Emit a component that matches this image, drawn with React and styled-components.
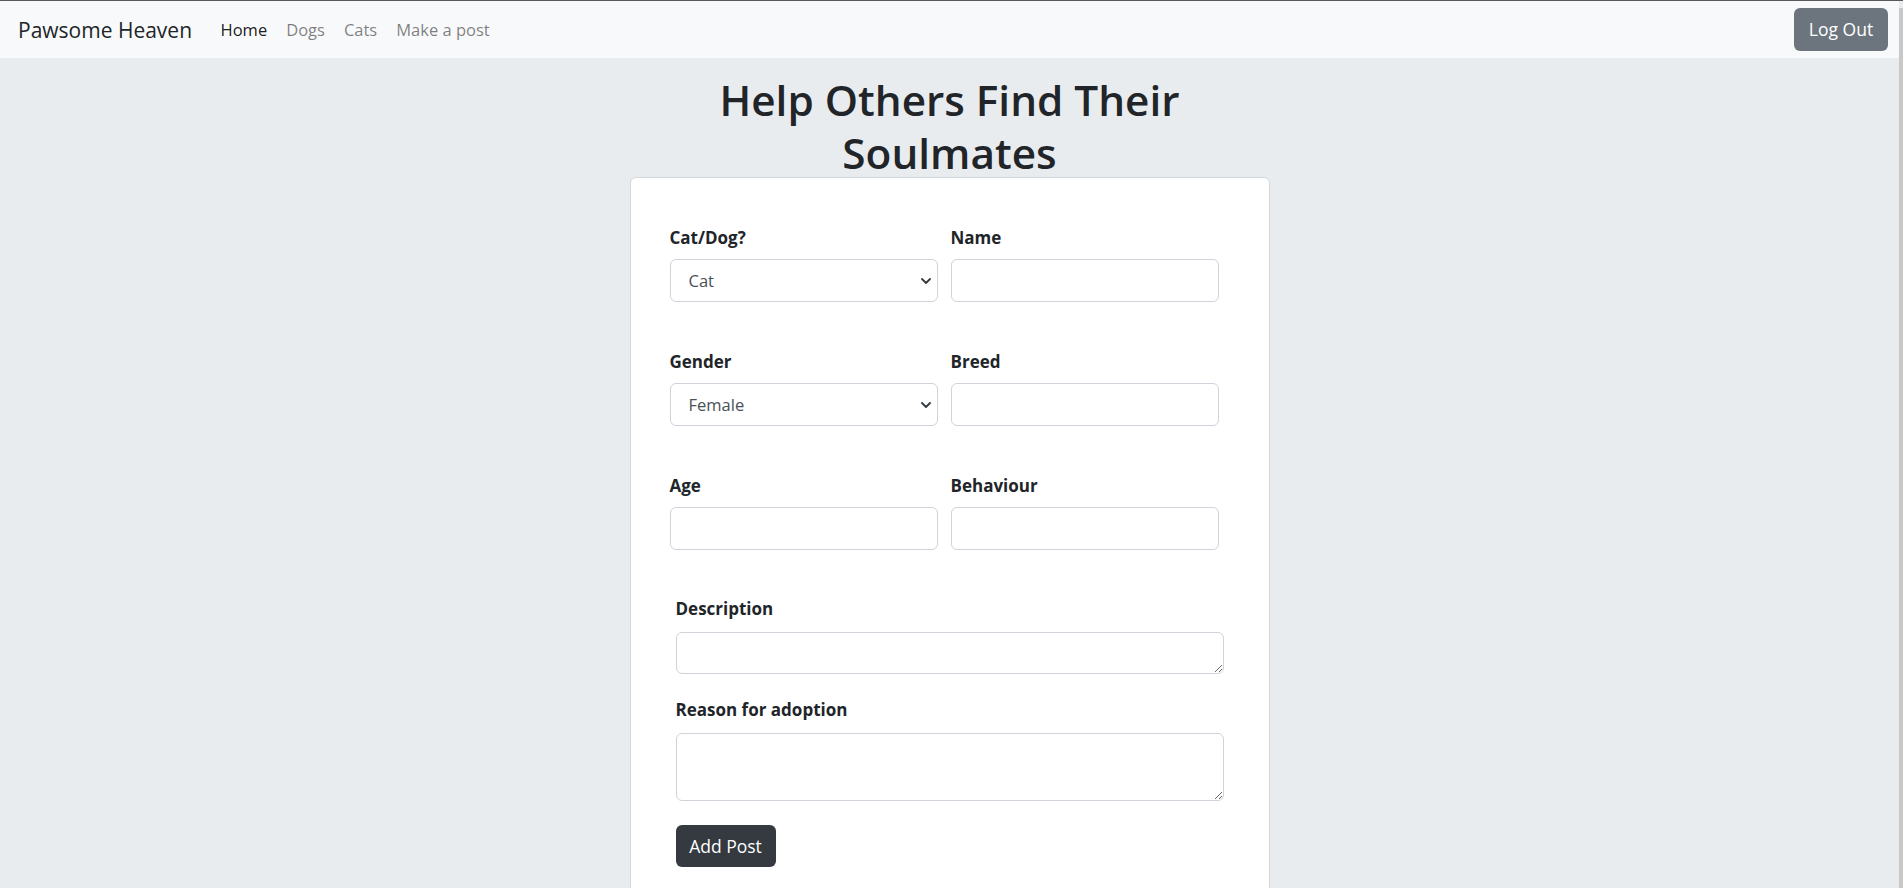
import styled, { createGlobalStyle } from 'styled-components';

const GlobalStyle = createGlobalStyle`
  html, body {
    margin: 0;
    padding: 0;
    overflow: hidden;
  }
  body {
    background-color: #e9ecef;
    font-family: 'Open Sans', 'Noto Sans', sans-serif;
    color: #212529;
  }
  * {
    box-sizing: border-box;
  }
`;

const rows = [
  [
    { label: 'Cat/Dog?', type: 'select', options: ['Cat', 'Dog'] },
    { label: 'Name', type: 'input' },
  ],
  [
    { label: 'Gender', type: 'select', options: ['Female', 'Male'] },
    { label: 'Breed', type: 'input' },
  ],
  [
    { label: 'Age', type: 'input' },
    { label: 'Behaviour', type: 'input' },
  ],
];

function Chevron() {
  return (
    <ChevronIcon width="10" height="6" viewBox="0 0 10 6">
      <path d="M1 1l4 4 4-4" fill="none" stroke="#343a40" strokeWidth="1.8" strokeLinecap="round" strokeLinejoin="round" />
    </ChevronIcon>
  );
}

function Field({ field }) {
  return (
    <FieldBox>
      <Label>{field.label}</Label>
      {field.type === 'select' ? (
        <SelectWrap>
          <Select defaultValue={field.options[0]}>
            {field.options.map((o) => (
              <option key={o}>{o}</option>
            ))}
          </Select>
          <Chevron />
        </SelectWrap>
      ) : (
        <Input type="text" />
      )}
    </FieldBox>
  );
}

function App() {
  return (
    <Shell>
      <GlobalStyle />
      <Page>
        <Navbar>
          <Brand>Pawsome Heaven</Brand>
          <NavList>
            <NavLink active>Home</NavLink>
            <NavLink>Dogs</NavLink>
            <NavLink>Cats</NavLink>
            <NavLink>Make a post</NavLink>
          </NavList>
          <LogOut>Log Out</LogOut>
        </Navbar>
        <Main>
          <Heading>
            Help Others Find Their
            <br />
            Soulmates
          </Heading>
          <Card>
            <Grid>
              {rows.map((row) =>
                row.map((f) => <Field key={f.label} field={f} />)
              )}
            </Grid>
            <Wide>
              <AreaLabel>Description</AreaLabel>
              <TextArea rows={1} h={42} />
              <AreaLabel top={24}>Reason for adoption</AreaLabel>
              <TextArea rows={2} h={68} />
              <AddButton>Add Post</AddButton>
            </Wide>
          </Card>
        </Main>
      </Page>
      <ScrollRail />
    </Shell>
  );
}

const Shell = styled.div`
  display: flex;
  height: 100vh;
  overflow: hidden;
  border-top: 1px solid #5a5a5a;
`;

const Page = styled.div`
  flex: 1;
  display: flex;
  flex-direction: column;
  min-width: 0;
  & > * {
    flex-shrink: 0;
  }
`;

const ScrollRail = styled.div`
  width: 4px;
  background-color: #c8c8c8;
  margin-top: 7px;
`;

const Navbar = styled.nav`
  height: 57px;
  display: flex;
  align-items: center;
  padding: 0 11px 0 18px;
  background-color: #f8f9fa;
`;

const Brand = styled.span`
  font-size: 21px;
  margin-right: 19px;
  color: #212529;
`;

const NavList = styled.div`
  display: flex;
`;

const NavLink = styled.span`
  padding: 0 9.5px;
  font-size: 16.5px;
  color: ${(p) => (p.active ? 'rgba(0, 0, 0, 0.9)' : 'rgba(0, 0, 0, 0.5)')};
`;

const LogOut = styled.button`
  margin-left: auto;
  margin-top: -1px;
  height: 43px;
  width: 94px;
  border: none;
  border-radius: 6px;
  background-color: #6c757d;
  color: #fff;
  font-family: inherit;
  font-size: 17.5px;
`;

const Main = styled.main`
  display: flex;
  flex-direction: column;
  align-items: center;
`;

const Heading = styled.h1`
  margin: 15px 0 -2px;
  font-size: 42.3px;
  line-height: 53px;
  font-weight: 600;
  text-align: center;
  color: #212529;
`;

const Card = styled.div`
  width: 640px;
  min-height: 760px;
  background-color: #fff;
  border: 1px solid #d4d7da;
  border-radius: 6px;
  padding: 48px 39px 40px;
`;

const Grid = styled.div`
  display: grid;
  grid-template-columns: 268px 268px;
  column-gap: 13px;
  row-gap: 48px;
`;

const FieldBox = styled.div`
  display: flex;
  flex-direction: column;
`;

const Label = styled.label`
  font-size: 17px;
  line-height: 24px;
  font-weight: 700;
  margin-bottom: 9px;
`;

const controlBase = `
  width: 100%;
  height: 43px;
  border: 1px solid #ced4da;
  border-radius: 6px;
  background-color: #fff;
  font-family: inherit;
  font-size: 16.5px;
  color: #495057;
  outline: none;
`;

const SelectWrap = styled.div`
  position: relative;
`;

const Select = styled.select`
  ${controlBase}
  appearance: none;
  padding: 0 30px 0 18px;
`;

const ChevronIcon = styled.svg`
  position: absolute;
  right: 7px;
  top: 19px;
  pointer-events: none;
`;

const Input = styled.input`
  ${controlBase}
  padding: 0 18px;
`;

const Wide = styled.div`
  display: flex;
  flex-direction: column;
  align-items: flex-start;
  width: 548px;
  margin-left: 6px;
  margin-top: 47px;
`;

const AreaLabel = styled.label`
  font-size: 17px;
  line-height: 24px;
  font-weight: 700;
  margin-top: ${(p) => p.top || 0}px;
  margin-bottom: 11px;
`;

const TextArea = styled.textarea`
  ${controlBase}
  height: ${(p) => p.h}px;
  padding: 6px 18px;
  resize: vertical;
`;

const AddButton = styled.button`
  margin-top: 24px;
  height: 42px;
  width: 100px;
  border: none;
  border-radius: 6px;
  background-color: #343a40;
  color: #fff;
  font-family: inherit;
  font-size: 17.5px;
`;

export default App;
